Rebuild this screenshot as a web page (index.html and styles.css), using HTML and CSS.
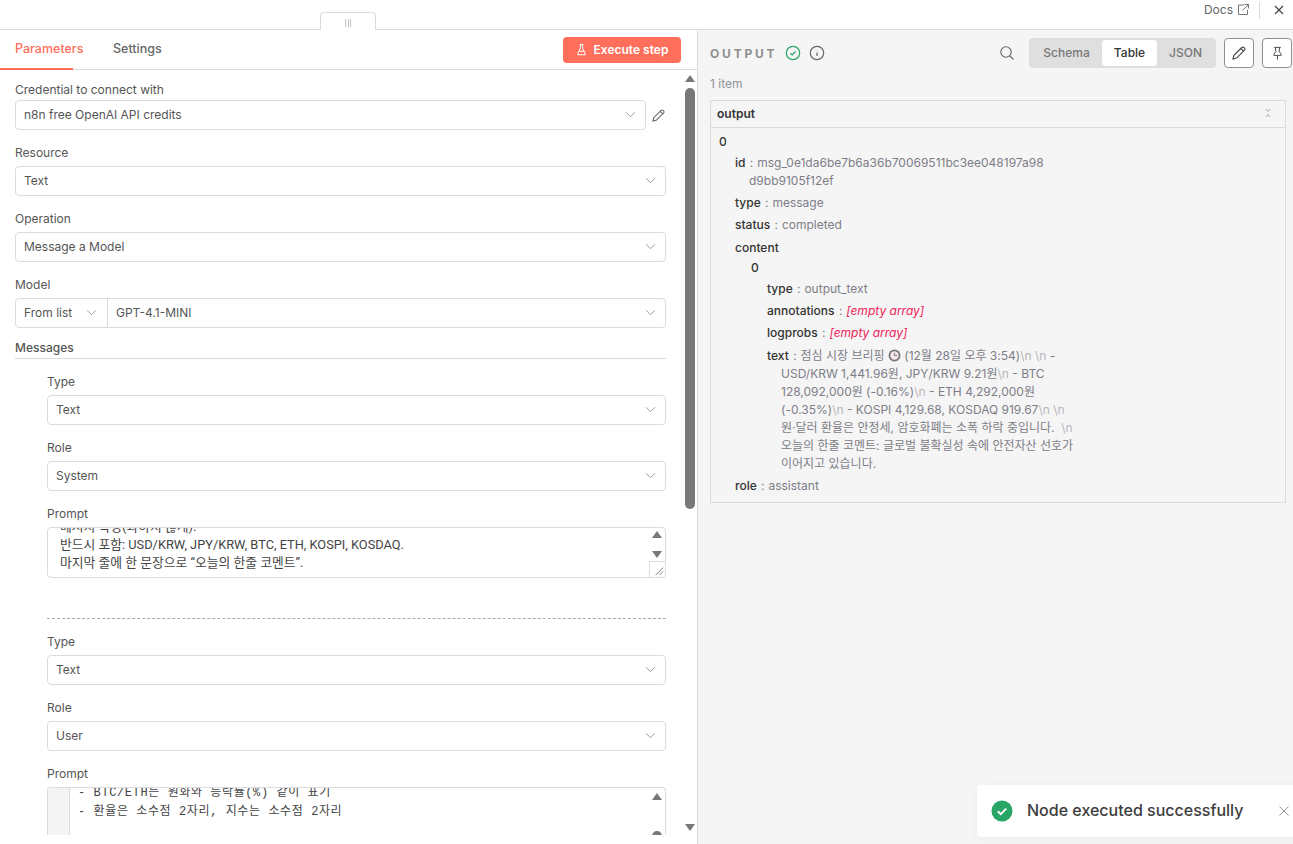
FILE: index.html
```html
<!DOCTYPE html>
<html lang="ko">
<head>
<meta charset="utf-8">
<title>n8n node</title>
<link rel="stylesheet" href="styles.css">
</head>
<body>
<header class="topbar">
  <div class="handle"><span class="grip"></span></div>
  <a class="docs">Docs
    <svg class="ic13" viewBox="0 0 14 14"><path d="M8 2H2.500v9.500H11.500V7M8.500 1.500h4v4M12.500 1.500L6.500 7.500"/></svg>
  </a>
  <span class="vsep"></span>
  <svg class="ic-close" viewBox="0 0 12 12"><path d="M2 2l8 8M10 2l-8 8"/></svg>
</header>
<main class="panels">
  <section class="left">
    <nav class="tabs">
      <a class="tab active">Parameters</a>
      <a class="tab">Settings</a>
      <button class="exec">
        <svg class="flask" viewBox="0 0 12 14"><path d="M4 1.500h4M4.800 1.500v4L2 11.500c-.3.700.1 1.200.8 1.200h6.400c.7 0 1.100-.5.800-1.200L7.200 5.500v-4M3.500 9h5"/></svg>
        Execute step
      </button>
    </nav>
    <div class="scrollarea">
      <div class="form">
        <label class="lab lab-first">Credential to connect with</label>
        <div class="cred-row">
          <div class="sel grow"><span>n8n free OpenAI API credits</span><svg class="chev" viewBox="0 0 12 8"><path d="M1 1.500l5 5 5-5"/></svg></div>
          <svg class="pen" viewBox="0 0 16 16"><path d="M2 14l.9-3.600 7.900-7.900c.6-.6 1.500-.6 2.100 0l.6.600c.6.600.6 1.500 0 2.100l-7.900 7.900zM9.800 3.500l2.700 2.700"/></svg>
        </div>
        <label class="lab">Resource</label>
        <div class="sel"><span>Text</span><svg class="chev" viewBox="0 0 12 8"><path d="M1 1.500l5 5 5-5"/></svg></div>
        <label class="lab">Operation</label>
        <div class="sel"><span>Message a Model</span><svg class="chev" viewBox="0 0 12 8"><path d="M1 1.500l5 5 5-5"/></svg></div>
        <label class="lab">Model</label>
        <div class="combo">
          <div class="combo-a"><span>From list</span><svg class="chev" viewBox="0 0 12 8"><path d="M1 1.500l5 5 5-5"/></svg></div>
          <div class="combo-b"><span>GPT-4.1-MINI</span><svg class="chev" viewBox="0 0 12 8"><path d="M1 1.500l5 5 5-5"/></svg></div>
        </div>
        <div class="section-title">Messages</div>
        <div class="msgs">
          <label class="lab lab-nested">Type</label>
          <div class="sel"><span>Text</span><svg class="chev" viewBox="0 0 12 8"><path d="M1 1.500l5 5 5-5"/></svg></div>
          <label class="lab">Role</label>
          <div class="sel"><span>System</span><svg class="chev" viewBox="0 0 12 8"><path d="M1 1.500l5 5 5-5"/></svg></div>
          <label class="lab">Prompt</label>
          <div class="ta">
            <div class="ta-text">메시지 작성(과하지 않게).<br>반드시 포함: USD/KRW, JPY/KRW, BTC, ETH, KOSPI, KOSDAQ.<br>마지막 줄에 한 문장으로 “오늘의 한줄 코멘트”.</div>
            <div class="ta-bar">
              <span class="up"></span><span class="down"></span>
              <span class="resizer"><svg viewBox="0 0 16 16"><path d="M14 6l-8 8M14 10l-4 4"/></svg></span>
            </div>
          </div>
          <div class="dashed"></div>
          <label class="lab lab-nested">Type</label>
          <div class="sel"><span>Text</span><svg class="chev" viewBox="0 0 12 8"><path d="M1 1.500l5 5 5-5"/></svg></div>
          <label class="lab">Role</label>
          <div class="sel"><span>User</span><svg class="chev" viewBox="0 0 12 8"><path d="M1 1.500l5 5 5-5"/></svg></div>
          <label class="lab">Prompt</label>
          <div class="code">
            <div class="gutter"></div>
            <div class="code-text">- BTC/ETH는 원화와 등락률(%) 같이 표기<br>- 환율은 소수점 2자리, 지수는 소수점 2자리</div>
            <div class="code-bar"><span class="up"></span><span class="thumb"></span></div>
          </div>
        </div>
      </div>
      <div class="sbar"><span class="up"></span><span class="sthumb"></span><span class="down"></span></div>
    </div>
  </section>
  <section class="right">
    <div class="out-head">
      <span class="out-title">OUTPUT</span>
      <svg class="ic-ok" viewBox="0 0 16 16"><circle cx="8" cy="8" r="6.700"/><path d="M5.300 8.200l1.900 1.800 3.400-3.500"/></svg>
      <svg class="ic-info" viewBox="0 0 16 16"><circle cx="8" cy="8" r="6.700"/><path d="M8 7.500v3.500M8 5v.3"/></svg>
      <svg class="ic-search" viewBox="0 0 16 16"><circle cx="7" cy="7" r="5.200"/><path d="M11 11l3.500 3.500"/></svg>
      <div class="toggle">
        <span class="opt opt-s">Schema</span>
        <span class="opt opt-t on">Table</span>
        <span class="opt opt-j">JSON</span>
      </div>
      <button class="sq"><svg class="pen dark" viewBox="0 0 16 16"><path d="M2 14l.9-3.600 7.900-7.900c.6-.6 1.500-.6 2.100 0l.6.600c.6.600.6 1.500 0 2.100l-7.900 7.900zM9.800 3.500l2.700 2.700"/></svg></button>
      <button class="sq"><svg class="pin" viewBox="0 0 16 16"><path d="M4.500 1.500h7M5.800 1.500l.4 4.500-2.200 3v1h8V9L9.800 6l.4-4.500M8 10v4.500"/></svg></button>
    </div>
    <div class="count">1 item</div>
    <div class="table">
      <div class="thead"><span>output</span><svg class="collapse" viewBox="0 0 8 10"><path d="M2 1l2 2.500L6 1M2 9l2-2.500L6 9"/></svg></div>
      <div class="tbody">
        <div class="idx">0</div>
        <div class="lv1">
          <div class="row"><b>id</b> <i>:</i> msg_0e1da6be7b6a36b70069511bc3ee048197a98<br>d9bb9105f12ef</div>
          <div class="row"><b>type</b> <i>:</i> message</div>
          <div class="row"><b>status</b> <i>:</i> completed</div>
          <div class="row row-gap"><b>content</b></div>
          <div class="lv1">
            <div class="idx idx2">0</div>
            <div class="lv1">
              <div class="row"><b>type</b> <i>:</i> output_text</div>
              <div class="row"><b>annotations</b> <i>:</i> <em>[empty array]</em></div>
              <div class="row"><b>logprobs</b> <i>:</i> <em>[empty array]</em></div>
              <div class="row row-gap"><b>text</b> <i>:</i> 점심 시장 브리핑 <svg class="clock" viewBox="0 0 12 12"><circle cx="6" cy="6" r="5.500"/><circle class="face" cx="6" cy="6" r="3.900"/><path d="M6 3.500V6h2.500"/></svg> (12월 28일 오후 3:54)<u>\n</u> <u>\n</u> -<br>USD/KRW 1,441.96원, JPY/KRW 9.21원<u>\n</u> - BTC<br>128,092,000원 (-0.16%)<u>\n</u> - ETH 4,292,000원<br>(-0.35%)<u>\n</u> - KOSPI 4,129.68, KOSDAQ 919.67<u>\n</u> <u>\n</u><br>원·달러 환율은 안정세, 암호화폐는 소폭 하락 중입니다. &nbsp;<u>\n</u><br>오늘의 한줄 코멘트: 글로벌 불확실성 속에 안전자산 선호가<br>이어지고 있습니다.</div>
            </div>
          </div>
          <div class="row"><b>role</b> <i>:</i> assistant</div>
        </div>
      </div>
    </div>
  </section>
</main>
<aside class="toast">
  <svg class="toast-ok" viewBox="0 0 22 22"><circle cx="11" cy="11" r="10.500"/><path d="M6.800 11.300l3 2.900 5.400-5.600"/></svg>
  <span class="toast-text">Node executed successfully</span>
  <svg class="toast-x" viewBox="0 0 12 12"><path d="M1.500 1.500l9 9M10.500 1.500l-9 9"/></svg>
</aside>
</body>
</html>
```
FILE: styles.css
```css
* { box-sizing: border-box; }
html, body { margin: 0; height: 100%; overflow: hidden; }
body {
  font-family: Inter, "Noto Sans CJK KR", sans-serif;
  font-size: 12px;
  color: #555;
  background: #fff;
  display: flex;
  flex-direction: column;
  height: 844px;
}
svg { fill: none; stroke: currentColor; flex: none; }

.topbar {
  height: 30px;
  flex: none;
  border-bottom: 1px solid #dbdbdb;
  display: flex;
  align-items: flex-start;
}
.handle {
  width: 56px;
  height: 18px;
  margin: 12px 0 -1px 320px;
  background: #fff;
  border: 1px solid #dbdbdb;
  border-bottom: 0;
  border-radius: 4px 4px 0 0;
  display: flex;
  justify-content: center;
  align-items: center;
}
.grip {
  width: 6px;
  height: 8px;
  margin-top: 2px;
  background: repeating-linear-gradient(90deg, #c4c4c4 0 1px, transparent 1px 2.500px);
}
.docs {
  margin: 3px 0 0 auto;
  height: 14px;
  line-height: 14px;
  color: #666;
  display: flex;
  align-items: center;
  gap: 3px;
}
.ic13 { width: 14px; height: 14px; color: #777; stroke-width: 1; }
.vsep { width: 1px; height: 17px; margin: 2px 13px 0 9px; background: #dbdbdb; }
.ic-close { width: 12px; height: 12px; margin: 4px 8px 0 0; color: #444; stroke-width: 1.200; }

.panels { flex: 1; display: flex; min-height: 0; }

.left {
  width: 698px;
  flex: none;
  border-right: 1px solid #dbdbdb;
  display: flex;
  flex-direction: column;
}
.tabs {
  height: 40px;
  flex: none;
  border-bottom: 1px solid #dbdbdb;
  display: flex;
  align-items: flex-start;
}
.tab {
  height: 40px;
  line-height: 37px;
  font-size: 12.500px;
  font-weight: 500;
  color: #666;
  padding: 0 15px;
}
.tab.active {
  color: #ff6f5c;
  width: 73px;
  padding-right: 0;
  border-bottom: 2px solid #ff6f5c;
  white-space: nowrap;
}
.tab + .tab { padding-left: 40px; }
.exec {
  margin: 7px 16px 0 auto;
  width: 118px;
  height: 26px;
  border: 0;
  border-radius: 4px;
  background: #ff6f5c;
  color: #fff;
  font: 600 12px Inter, sans-serif;
  display: flex;
  align-items: center;
  justify-content: center;
  gap: 7px;
  padding: 0 0 1px;
}
.flask { width: 11px; height: 13px; stroke-width: 1.100; }

.scrollarea {
  height: 765px;
  flex: none;
  display: flex;
  overflow: hidden;
}
.form {
  width: 683px;
  flex: none;
  padding: 0 17px 0 15px;
}
.lab {
  display: block;
  height: 18px;
  line-height: 18px;
  margin: 14px 0 4px;
  color: #555;
}
.lab-first { margin: 11px 0 1px; }
.lab-nested { margin-top: 14px; }
.cred-row { display: flex; align-items: center; gap: 5px; }
.cred-row + .lab { margin-top: 14px; }
.sel {
  height: 30px;
  border: 1px solid #dcdcdc;
  border-radius: 4px;
  padding: 0 9px 1px 8px;
  display: flex;
  align-items: center;
  justify-content: space-between;
  color: #555;
  background: #fff;
}
.grow { flex: 1; min-width: 0; }
.chev { width: 11px; height: 7px; color: #8d8d8d; stroke-width: 1; }
.pen { width: 15px; height: 15px; color: #666; stroke-width: 1.100; }
.pen.dark { width: 16px; height: 16px; color: #444; }
.combo {
  height: 30px;
  border: 1px solid #dcdcdc;
  border-radius: 4px;
  display: flex;
}
.combo-a {
  width: 92px;
  flex: none;
  border-right: 1px solid #dcdcdc;
  padding: 0 10px 1px 8px;
  display: flex;
  align-items: center;
  justify-content: space-between;
}
.combo-b {
  flex: 1;
  padding: 0 9px 1px 8px;
  display: flex;
  align-items: center;
  justify-content: space-between;
}
.section-title {
  height: 20px;
  margin-top: 11px;
  line-height: 18px;
  font-weight: 500;
  border-bottom: 1px solid #dbdbdb;
}
.msgs { padding-left: 32px; }
.ta {
  height: 51px;
  border: 1px solid #dcdcdc;
  border-radius: 4px;
  display: flex;
  overflow: hidden;
}
.ta-text {
  flex: 1;
  margin-top: -10px;
  padding-left: 12px;
  line-height: 18px;
  color: #444;
  font-family: Roboto, "Noto Sans CJK KR", sans-serif;
  font-size: 12.800px;
  white-space: nowrap;
}
.ta-bar {
  width: 16px;
  flex: none;
  display: flex;
  flex-direction: column;
  align-items: center;
  padding-top: 3px;
}
.up, .down {
  width: 0;
  height: 0;
  border-left: 5px solid transparent;
  border-right: 5px solid transparent;
  flex: none;
}
.up { border-bottom: 7px solid #787878; }
.down { border-top: 7px solid #787878; }
.ta-bar .down { margin-top: 13px; }
.resizer {
  width: 16px;
  height: 16px;
  margin-top: auto;
  border-left: 1px solid #dcdcdc;
  border-top: 1px solid #dcdcdc;
  color: #777;
}
.resizer svg { display: block; width: 15px; height: 15px; stroke-width: 1; }
.dashed {
  height: 1px;
  margin-top: 40px;
  border-top: 1px dashed #aaa;
}
.dashed + .lab { margin-top: 14px; }
.code {
  height: 70px;
  border: 1px solid #dcdcdc;
  border-bottom: 0;
  border-radius: 4px 4px 0 0;
  display: flex;
  overflow: hidden;
}
.gutter { width: 22px; flex: none; background: #f4f4f4; border-right: 1px solid #dcdcdc; }
.code-text {
  flex: 1;
  margin-top: -4px;
  padding-left: 8px;
  line-height: 19px;
  color: #444;
  font-family: "Liberation Mono", "Noto Sans CJK KR", monospace;
  font-size: 12px;
  letter-spacing: .6px;
  white-space: nowrap;
}
.code-bar {
  width: 16px;
  flex: none;
  display: flex;
  flex-direction: column;
  align-items: center;
  padding-top: 5px;
}
.thumb { width: 10px; height: 30px; margin-top: 31px; border-radius: 5px; background: #787878; flex: none; }
.sbar {
  width: 13px;
  flex: none;
  display: flex;
  flex-direction: column;
  align-items: center;
  padding-top: 5px;
  padding-bottom: 4px;
}
.sthumb { width: 10px; height: 421px; margin-top: 6px; border-radius: 5px; background: #787878; flex: none; }
.sbar .down { margin-top: auto; }

.right {
  flex: 1;
  min-width: 0;
  background: #f5f5f5;
  padding: 0 0 0 12px;
}
.out-head { height: 30px; margin-top: 8px; display: flex; align-items: center; }
.out-head > * { flex: none; }
.out-title {
  font-size: 12px;
  font-weight: 700;
  letter-spacing: 2.800px;
  color: #8f8f8f;
  width: 75px;
}
.ic-ok { width: 16px; height: 16px; color: #29a566; stroke-width: 1.200; }
.ic-info { width: 16px; height: 16px; color: #666; stroke-width: 1.200; margin-left: 8px; }
.ic-search { width: 16px; height: 16px; color: #666; stroke-width: 1.100; margin-left: 174px; }
.toggle {
  width: 187px;
  height: 30px;
  margin-left: 14px;
  background: #dfdfdf;
  border-radius: 4px;
  display: flex;
  align-items: center;
  padding: 0 2px;
}
.opt { height: 26px; line-height: 26px; text-align: center; color: #777; font-weight: 500; }
.opt-s { width: 71px; }
.opt-t { width: 55px; }
.opt-j { width: 57px; }
.opt.on { background: #fff; border-radius: 3px; color: #333; }
.sq {
  width: 30px;
  height: 30px;
  margin-left: 8px;
  border: 1px solid #8f8f8f;
  border-radius: 4px;
  background: #fff;
  padding: 0;
  display: flex;
  align-items: center;
  justify-content: center;
}
.pin { width: 15px; height: 15px; color: #444; stroke-width: 1; }
.count { margin-top: 8px; height: 16px; line-height: 16px; color: #909399; }
.table {
  width: 576px;
  margin-top: 8px;
  border: 1px solid #dbdbdb;
}
.thead {
  height: 27px;
  border-bottom: 1px solid #dbdbdb;
  padding: 0 13px 2px 6px;
  display: flex;
  align-items: center;
  justify-content: space-between;
  font-weight: 600;
  color: #333;
}
.collapse { width: 8px; height: 10px; color: #aaa; stroke-width: 1; }
.tbody { padding: 5px 8px 3px; line-height: 18px; color: #7d7d87; }
.idx { font-weight: 500; color: #333; height: 17px; }
.idx2 { margin-top: -2px; }
.lv1 { padding-left: 16px; }
.row {
  margin: 4px 0;
  padding-left: 14px;
  text-indent: -14px;
  white-space: nowrap;
}
.row-gap { margin-top: 5px; }
.row b { font-weight: 500; color: #333; }
.row i { font-style: normal; margin: 0 .5px 0 1px; }
.row em { font-style: italic; color: #f0245a; }
.row u { text-decoration: none; color: #b5b5bb; }
.clock { width: 13px; height: 13px; vertical-align: -2px; fill: #77777b; stroke: none; }
.clock .face { fill: #f8e6e8; }
.clock path { fill: none; stroke: #77777b; stroke-width: .9; }

.toast {
  position: absolute;
  left: 977px;
  top: 785px;
  width: 330px;
  height: 52px;
  background: #fff;
  border-radius: 4px;
  display: flex;
  align-items: center;
  padding-left: 14px;
  box-shadow: 0 2px 12px rgba(0,0,0,.04);
}
.toast-ok { width: 22px; height: 22px; fill: #29a566; stroke: none; }
.toast-ok path { fill: none; stroke: #fff; stroke-width: 2; }
.toast-text { margin: 0 0 2px 14px; font-size: 16px; font-weight: 500; color: #3d3d3d; white-space: nowrap; }
.toast-x { width: 12px; height: 12px; margin-left: 35px; color: #999; stroke-width: 1; }
```
